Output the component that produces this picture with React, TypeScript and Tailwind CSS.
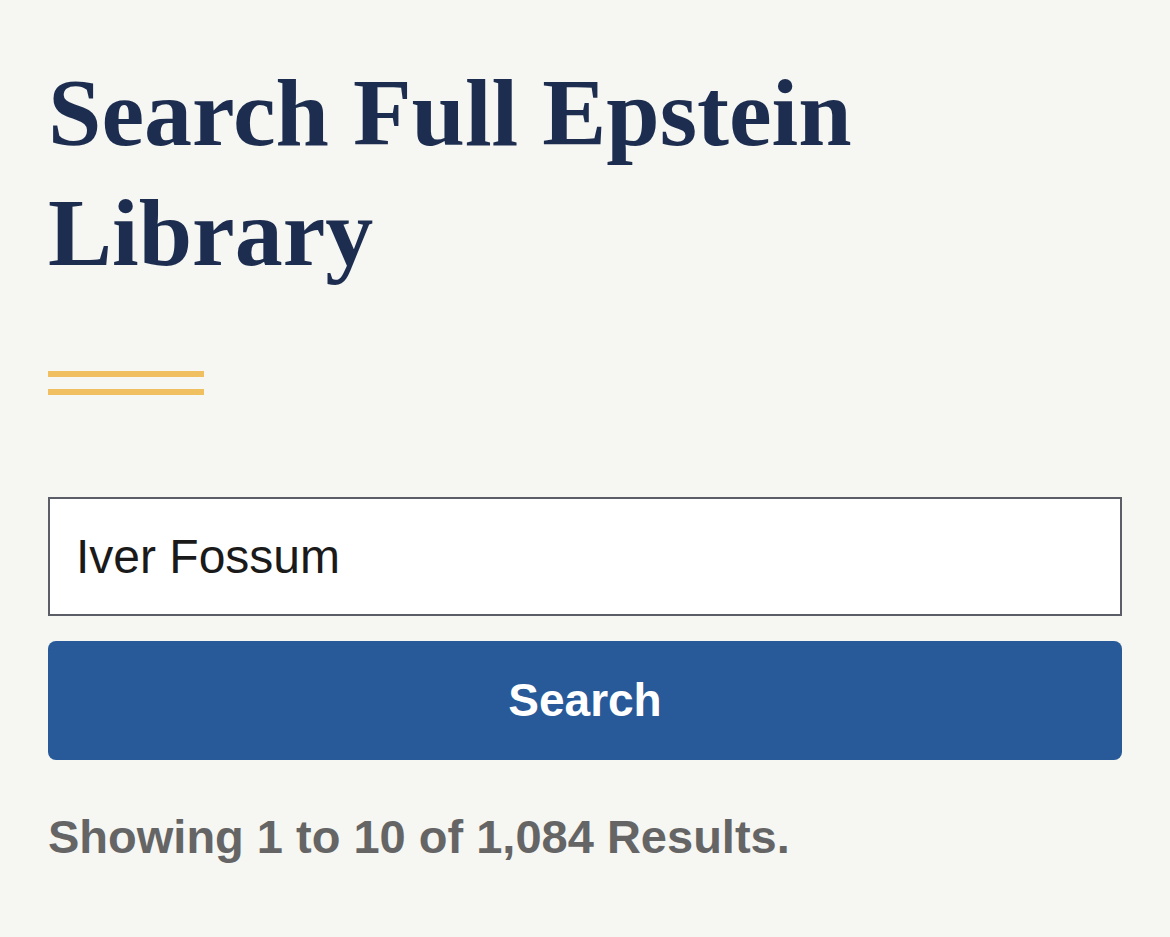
import React from "react";

export default function App() {
  return (
    <div className="min-h-[937px] w-full bg-[#f6f6f2] px-[48px] pt-[53px]">
      <h1 className="m-0 font-['Liberation_Serif',serif] text-[96px] font-bold leading-[120px] text-[#1d2d50]">
        Search Full Epstein
        <br />
        Library
      </h1>
      <div className="mt-[78px] flex w-[156px] flex-col gap-[12px]">
        <div className="h-[6px] w-full bg-[#f0c060]" />
        <div className="h-[6px] w-full bg-[#f0c060]" />
      </div>
      <div className="mt-[102px] flex w-[1074px] flex-col gap-[25px]">
        <input
          type="text"
          defaultValue="Iver Fossum"
          className="h-[119px] w-full border-[2px] border-[#5b5e66] bg-white pl-[26px] font-['Liberation_Sans',Arial,sans-serif] text-[48px] text-[#1a1a1a] outline-none"
        />
        <button className="flex h-[119px] w-full items-center justify-center rounded-[8px] bg-[#285a9a] font-['Liberation_Sans',Arial,sans-serif] text-[46px] font-bold text-white">
          Search
        </button>
      </div>
      <p className="mt-[54px] font-['Liberation_Sans',Arial,sans-serif] text-[47px] font-bold leading-[46px] text-[#656565]">
        Showing 1 to 10 of 1,084 Results.
      </p>
    </div>
  );
}
